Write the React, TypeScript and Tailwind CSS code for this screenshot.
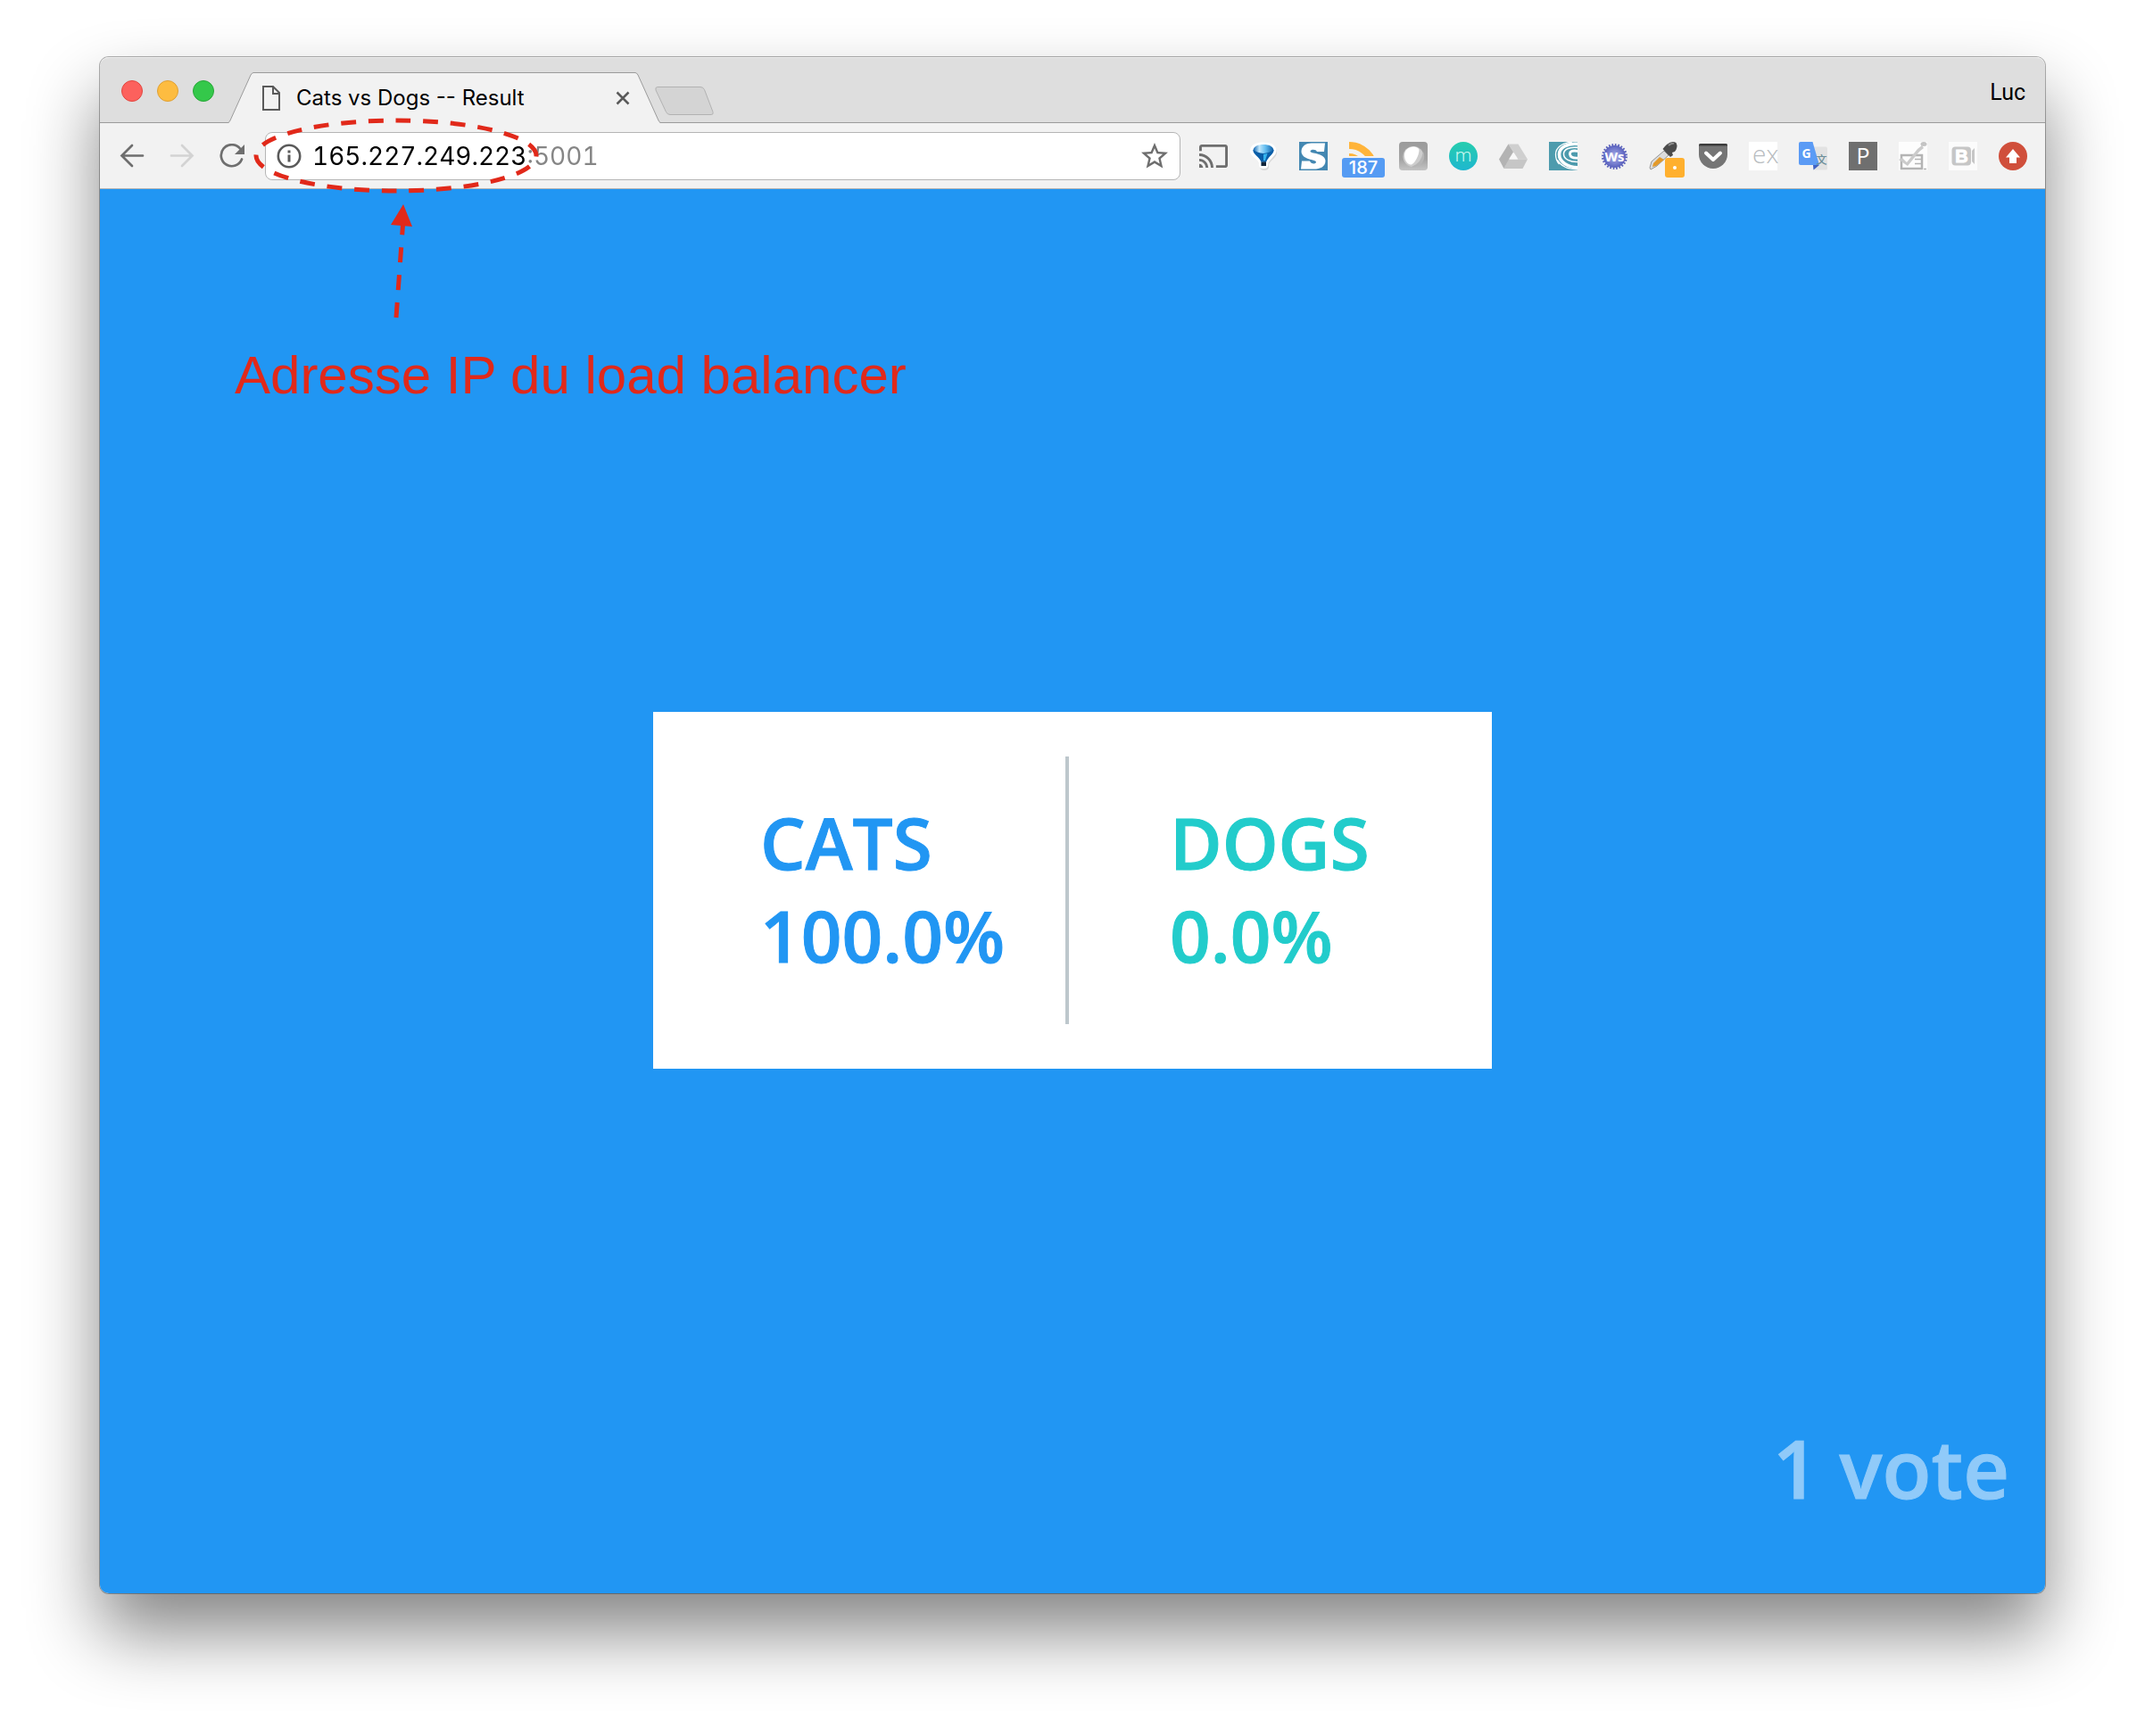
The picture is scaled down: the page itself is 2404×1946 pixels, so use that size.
import type { ReactNode } from "react";

function Svg({ children, label }: { children: ReactNode; label?: string }) {
  return (
    <svg viewBox="0 0 32 32" className="block size-8 overflow-visible" aria-label={label}>
      {children}
    </svg>
  );
}

const CastIcon = () => (
  <svg viewBox="1 1 22 22" className="block size-8" fill="#6e6e6e">
    <path d="M21 3H3c-1.1 0-2 .9-2 2v3h2V5h18v14h-7v2h7c1.1 0 2-.9 2-2V5c0-1.1-.9-2-2-2zM1 18v3h3c0-1.66-1.34-3-3-3zm0-4v2c2.76 0 5 2.24 5 5h2c0-3.87-3.13-7-7-7zm0-4v2c4.97 0 9 4.03 9 9h2c0-6.08-4.93-11-11-11z" />
  </svg>
);

const BalloonIcon = () => (
  <Svg>
    <defs>
      <linearGradient id="balloon" x2="1" y2="0">
        <stop offset="0" stopColor="#0c62b0" />
        <stop offset="0.300" stopColor="#bfe6fb" />
        <stop offset="0.600" stopColor="#63bdf0" />
        <stop offset="1" stopColor="#0a5aa3" />
      </linearGradient>
    </defs>
    <path d="M3 11C3 4 9 2 17 2s14 4 14 10c0 5-6 8-9 13v4q-1 3-5 3t-5-3l-1-4C9 18 3 16 3 11z" fill="#cfcfcf" opacity=".7" />
    <path d="M1 10.500C1 3 8 .5 16 .5s14.500 3 14.500 9.500c0 5-6 8-9 13.500l-.5 4q-1 2.500-5 2.500t-5-2.500l-.5-4C8.500 18 1 16 1 10.500z" fill="#fff" />
    <path d="M4.500 9.500C5 5 10 3 16 3s11 2 11.500 6.500c0 4-6.500 7.500-8.500 13V27h-5.500v-4.500C11.500 17 4.500 14 4.500 9.500z" fill="url(#balloon)" />
    <path d="M4.500 9q5 3.500 11.500 4 6.500-.5 11.500-4c0 4-6.500 8-8.500 13.500h-5.500C11.500 17 4.500 13.500 4.500 9z" fill="#0b5ea8" />
    <path d="M16 14l4.500-1-2.500 8h-2z" fill="#35b4ee" />
    <path d="M13.500 22.500H19V27h-5.500z" fill="#12253a" />
  </Svg>
);

const SIcon = () => (
  <Svg>
    <path d="M0 0h32v32H0z" fill="#4488b2" />
    <path d="M29 1.500l-1 9.500h-8c-1-3-7-3-7.500-.5-.5 3 16 1.500 17 10.500 0 7-6 9.500-13 9.500H2l1-9h9c1 3.500 7 4 7 1 0-3-16-2-16.500-11.500C2.500 4 9 1 15 1.500z" fill="#fff" />
  </Svg>
);

const FeedIcon = () => (
  <div className="relative">
    <Svg>
      <path d="M0 4a28 28 0 0 1 28 28" fill="none" stroke="#ffb43a" strokeWidth="8" />
      <path d="M0 16a16 16 0 0 1 16 16" fill="none" stroke="#ffb43a" strokeWidth="6" />
    </Svg>
    <span className="absolute -left-2 top-4 flex h-6 w-12 items-center justify-center border-t-2 border-[#f2f2f2] bg-[#f2f2f2]">
      <span className="flex h-[22px] w-12 items-center justify-center rounded-[3px] bg-[#559bf3] text-[20px] leading-none font-medium text-white">187</span>
    </span>
  </div>
);

const ShieldIcon = () => (
  <Svg>
    <defs>
      <linearGradient id="shield" x2="0" y2="1">
        <stop offset="0" stopColor="#9b9b9b" />
        <stop offset=".6" stopColor="#a3a3a3" />
        <stop offset="1" stopColor="#c4c4c4" />
      </linearGradient>
    </defs>
    <rect width="32" height="32" rx="4" fill="url(#shield)" />
    <circle cx="16" cy="16.500" r="11.500" fill="#cdcdcd" />
    <path d="M27 11a12 12 0 0 1-13 17q11-4 13-17z" fill="#b5b5b5" />
    <path d="M6 15C6 9 11 5.500 16 5.500c3 0 6 1.500 6.500 3.500 0 6-5 15-8.500 16.500C9 26 6 20 6 15z" fill="#fff" />
  </Svg>
);

const MIcon = () => (
  <Svg>
    <defs>
      <linearGradient id="m" x2="0" y2="1">
        <stop offset="0" stopColor="#26cdae" />
        <stop offset="1" stopColor="#1eb7cf" />
      </linearGradient>
    </defs>
    <circle cx="16" cy="16" r="16" fill="url(#m)" />
    <text x="16" y="22" textAnchor="middle" fill="#c9f6ef" fontSize="21" fontWeight="300" fontFamily="Roboto, sans-serif">m</text>
  </Svg>
);

const DriveIcon = () => (
  <Svg>
    <path d="M10.500 2.500h11L32 19.500H21.500z" fill="#cfcfcf" />
    <path d="M10.500 2.500L0 19.500 5.500 30l11-18z" fill="#b3b3b3" />
    <path d="M11 19.500h21L26.500 30h-21z" fill="#c6c6c6" />
    <path d="M16 11.500l5 8H11z" fill="#f8f8f8" />
  </Svg>
);

const SwirlIcon = () => (
  <Svg>
    <defs>
      <clipPath id="sq"><path d="M0 0h32v32H0z" /></clipPath>
    </defs>
    <path d="M0 0h32v32H0z" fill="#4d9bad" />
    <g fill="none" stroke="#fff" clipPath="url(#sq)">
      <path d="M26 0C14 1 7.500 7 7.500 14c0 4 1 8 4 11" strokeWidth="1.300" />
      <path d="M33 2.500C20 1 11.500 7 11.500 14c0 9 10 14.500 22 15" strokeWidth="3.600" />
      <path d="M33 6.500C22 5 16.500 9 16.500 13.500c0 6 7 9.500 17 9" strokeWidth="1.500" />
      <path d="M33 10.500c-7-1.500-10 .5-9.500 3.500.5 3.500 5 4.500 10 4" strokeWidth="2.800" />
      <path d="M9 20c4 7 13 11 24 11" strokeWidth="1.500" />
    </g>
  </Svg>
);

const WsIcon = () => (
  <Svg>
    <defs>
      <radialGradient id="ws">
        <stop offset="0" stopColor="#aeb3ea" />
        <stop offset="1" stopColor="#5a62c0" />
      </radialGradient>
    </defs>
    <circle cx="17.500" cy="16.500" r="12.500" fill="url(#ws)" />
    <circle cx="17.500" cy="16.500" r="13" fill="none" stroke="#5c63bb" strokeWidth="3" strokeDasharray="1.700 1.700" />
    <text x="17.500" y="22" textAnchor="middle" fill="#fff" fontSize="15" fontWeight="700" fontFamily="Open Sans, sans-serif">Ws</text>
  </Svg>
);

const DropperIcon = () => (
  <div className="relative">
    <Svg>
      <path d="M17 10l5 5L9 27l-7 4-1-2 2-7z" fill="#dcdcdc" stroke="#969696" />
      <path d="M12 17l5 3-9 7-4 1 1-4z" fill="#e39a2a" />
      <path d="M20 3q6-5 10.500-2Q33 6 29 11l-3 1 1 3-3 2-8.500-9L18 5z" fill="#4c4c4c" />
      <path d="M22 4q4-3 6-2" stroke="#8d8d8d" strokeWidth="2" fill="none" />
    </Svg>
    <span className="absolute left-[18px] top-[18px] flex size-[22px] items-center justify-center rounded-[3px] bg-[#ffb02e]">
      <span className="size-1 rounded-full bg-white" />
    </span>
  </div>
);

const PocketIcon = () => (
  <Svg>
    <path d="M0 4q0-2 2-2h28q2 0 2 2v10a16 16 0 0 1-32 0z" fill="#757575" />
    <path d="M0 4.500V4q0-2 2-2h28q2 0 2 2v.5z" fill="#3d3d3d" />
    <path d="M8 12.500l8 7.500 8-7.500" fill="none" stroke="#fff" strokeWidth="4" strokeLinecap="round" strokeLinejoin="round" />
  </Svg>
);

const ExIcon = () => (
  <Svg>
    <path d="M0 0h32v32H0z" fill="#fff" />
    <text x="4" y="24" fill="#b8bcc0" fontSize="28" fontWeight="300" fontFamily="Open Sans, sans-serif">ex</text>
  </Svg>
);

const TranslateIcon = () => (
  <Svg>
    <path d="M14 5.500h16q2 0 2 2V30q0 1.500-2 1.500H17z" fill="#e2e2e2" />
    <path d="M16 26h7l-6.500 5.500z" fill="#3f62c4" />
    <path d="M2 0h13.500L23 26H2q-2 0-2-2V2q0-2 2-2z" fill="#5b9bf5" />
    <text x="19.500" y="25" fill="#6d8e99" fontSize="12" fontWeight="500" fontFamily="Noto Sans CJK SC, sans-serif">文</text>
    <text x="3.500" y="18" fill="#fff" fontSize="14" fontWeight="700" fontFamily="Open Sans, sans-serif">G</text>
  </Svg>
);

const PIcon = () => (
  <Svg>
    <path d="M0 0h32v32H0z" fill="#6f6f6f" />
    <text x="8.500" y="25" fill="#fff" fontSize="25" fontFamily="Open Sans, sans-serif">P</text>
  </Svg>
);

const ChecklistIcon = () => (
  <Svg>
    <path d="M0 0h32v32H0z" fill="#fdfdfd" />
    <path d="M3 15h23v15H3z" fill="none" stroke="#b4b4b4" strokeWidth="2.500" />
    <path d="M18 19.500h7M18 24.500h7M28 30.500h3" stroke="#b4b4b4" strokeWidth="1.500" />
    <path d="M0 20l4-2 5 5L21 8l5-4 2 3-5 4L10 27z" fill="#cbcbcb" />
    <ellipse cx="28" cy="2.500" rx="3.500" ry="2.500" fill="#c4c4c4" />
  </Svg>
);

const BIcon = () => (
  <Svg>
    <path d="M0 0h32v32H0z" fill="#fbfbfb" />
    <rect x="3.500" y="5.500" width="21.500" height="21" rx="4" fill="#c6c6c6" />
    <path d="M29 7v18l-3-3V10z" fill="#c6c6c6" />
    <text x="14.500" y="23" textAnchor="middle" fill="#fff" stroke="#fff" fontSize="20" fontWeight="700" fontFamily="Liberation Sans, sans-serif">B</text>
  </Svg>
);

const UpIcon = () => (
  <Svg>
    <circle cx="16" cy="16" r="16" fill="#d04f3b" />
    <path d="M16 8l8 9.500h-4V24h-8v-6.500H8z" fill="#fff" />
  </Svg>
);

const extensions: [string, () => ReactNode][] = [
  ["Cast", CastIcon],
  ["Balloon", BalloonIcon],
  ["S", SIcon],
  ["Feeds", FeedIcon],
  ["Shield", ShieldIcon],
  ["Momentum", MIcon],
  ["Drive", DriveIcon],
  ["Swirl", SwirlIcon],
  ["WebSocket", WsIcon],
  ["Color picker", DropperIcon],
  ["Pocket", PocketIcon],
  ["ex", ExIcon],
  ["Translate", TranslateIcon],
  ["P", PIcon],
  ["Checklist", ChecklistIcon],
  ["B", BIcon],
  ["Update", UpIcon],
];

function TitleBar() {
  return (
    <header className="flex h-[74px] items-end rounded-t-[10px] bg-[#dedede] shadow-[inset_0_-1px_0_#9b9b9b,inset_0_1px_0_#ececec]">
      <div className="flex gap-4 self-center pt-0.5 pl-6">
        <button aria-label="Close window" className="size-6 rounded-full border border-[#e2463f] bg-[#fc615d]" />
        <button aria-label="Minimize window" className="size-6 rounded-full border border-[#dfa035] bg-[#fdbc40]" />
        <button aria-label="Zoom window" className="size-6 rounded-full border border-[#28a738] bg-[#34c84a]" />
      </div>
      <div className="ml-4 flex h-[57px] w-[484px]">
        <svg viewBox="0 0 28 57" className="h-[57px] w-7 shrink-0">
          <path d="M0 56.500Q1 56 2 54L25 3Q26.500.5 28 .5V57H0z" fill="#f2f2f2" />
          <path d="M0 56.500Q1 56 2 54L25 3Q26.500.5 28 .5" fill="none" stroke="#9b9b9b" />
        </svg>
        <div className="flex flex-1 items-center border-t border-[#9b9b9b] bg-[#f2f2f2] pr-1.5 pl-2.5">
          <svg viewBox="0 0 20 28" className="h-7 w-5" fill="none" stroke="#5a5a5a" strokeWidth="2">
            <path d="M1 1h11l7 7v19H1z" />
            <path d="M12 1v8h7" />
          </svg>
          <span className="ml-[18px] flex-1 text-[24px] whitespace-nowrap text-black">Cats vs Dogs -- Result</span>
          <button aria-label="Close tab">
            <svg viewBox="0 0 16 16" className="size-4" stroke="#5a5a5a" strokeWidth="2.500">
              <path d="M1.500 1.500l13 13M14.500 1.500l-13 13" />
            </svg>
          </button>
        </div>
        <svg viewBox="0 0 28 57" className="h-[57px] w-7 shrink-0">
          <path d="M28 56.500Q27 56 26 54L3 3Q1.500.5 0 .5V57H28z" fill="#f2f2f2" />
          <path d="M28 56.500Q27 56 26 54L3 3Q1.500.5 0 .5" fill="none" stroke="#9b9b9b" />
        </svg>
      </div>
      <button aria-label="New tab" className="-ml-1.5 pb-[9px]">
        <svg viewBox="0 0 66 32" className="h-8 w-[66px]">
          <path d="M3 .5h48q3 0 4.500 3l9.500 25q1 3-2 3H17q-3 0-4.500-3L1 4Q0 .5 3 .5z" fill="#d4d4d4" stroke="#b2b2b2" />
        </svg>
      </button>
      <button className="mr-[22px] ml-auto self-center pt-1.5 font-[Roboto,sans-serif] text-[25px] leading-8 text-black">Luc</button>
    </header>
  );
}

function Toolbar() {
  return (
    <nav className="flex h-[74px] items-center border-b border-[#b4b4b4] bg-[#f2f2f2] pl-[22px] pr-5">
      <button aria-label="Back">
        <svg viewBox="0 0 28 28" className="size-7" fill="none" stroke="#6e6e6e" strokeWidth="2.700" strokeLinecap="round">
          <path d="M26 13.500H3M14 2L2.500 13.500 14 25" />
        </svg>
      </button>
      <button aria-label="Forward" className="ml-7" disabled>
        <svg viewBox="0 0 28 28" className="size-7" fill="none" stroke="#d3d3d3" strokeWidth="2.700" strokeLinecap="round">
          <path d="M2 13.500h23M14 2l11.500 11.500L14 25" />
        </svg>
      </button>
      <button aria-label="Reload" className="ml-7">
        <svg viewBox="0 0 28 28" className="size-7" fill="none">
          <path d="M25 17.500A12 12 0 1 1 23 5.500" stroke="#6e6e6e" strokeWidth="2.700" strokeLinecap="round" />
          <path d="M28 1v11H17z" fill="#6e6e6e" />
        </svg>
      </button>
      <div className="ml-[23px] flex h-[54px] flex-1 items-center rounded-lg border border-[#b5b5b5] bg-white pr-2.5 pl-3">
        <svg viewBox="0 0 28 28" className="size-7 shrink-0" aria-hidden="true">
          <circle cx="14" cy="14" r="12.200" fill="none" stroke="#5a5a5a" strokeWidth="2.600" />
          <path d="M12.500 7.500h3v3h-3zM12.500 12.500h3v8h-3z" fill="#5a5a5a" />
        </svg>
        <input
          aria-label="Address"
          defaultValue="165.227.249.223:5001"
          className="ml-3 min-w-0 flex-1 bg-[linear-gradient(90deg,#000_238px,#858585_238px)] bg-clip-text text-[28px] leading-9 text-transparent tabular-nums outline-none"
        />
        <button aria-label="Bookmark this page">
          <svg viewBox="0 0 24 24" className="size-9" fill="#6e6e6e">
            <path d="M22 9.240l-7.190-.620L12 2 9.190 8.630 2 9.240l5.460 4.730L5.820 21 12 17.270 18.180 21l-1.630-7.030L22 9.240zM12 15.400l-3.760 2.270 1-4.280-3.320-2.880 4.380-.380L12 6.100l1.710 4.040 4.380.380-3.320 2.880 1 4.280L12 15.400z" />
          </svg>
        </button>
      </div>
      <div className="ml-[21px] flex gap-6">
        {extensions.map(([name, Icon]) => (
          <button key={name} aria-label={name} className="size-8">
            <Icon />
          </button>
        ))}
      </div>
    </nav>
  );
}

function Annotation() {
  return (
    <div className="pointer-events-none absolute top-[68px] left-[151px] flex flex-col gap-6 text-[#e1291a]">
      <svg viewBox="0 0 360 229" className="h-[229px] w-[360px]" fill="none" stroke="currentColor" strokeWidth="5">
        <ellipse cx="181" cy="42.500" rx="157" ry="39.500" pathLength="682" strokeDasharray="17 14" strokeDashoffset="16" />
        <path d="M181 224L188.500 120" strokeDasharray="17 14" />
        <path d="M189 97l10 25-24-2z" fill="currentColor" stroke="none" />
      </svg>
      <p className="font-['Liberation_Sans',Arial,sans-serif] text-[60px] leading-[72px] whitespace-nowrap">Adresse IP du load balancer</p>
    </div>
  );
}

export default function App() {
  return (
    <div className="flex min-h-screen bg-white px-28 pt-16 pb-40 font-[Inter,sans-serif]">
      <div className="relative flex flex-1 flex-col rounded-[10px] shadow-[0_0_0_1px_rgba(0,0,0,0.3),0_44px_80px_rgba(0,0,0,0.48)]">
        <TitleBar />
        <Toolbar />
        <main className="grid flex-1 grid-rows-[1fr_auto_1fr] rounded-b-[10px] bg-[#2196f3] pb-0.5 font-['Open_Sans',sans-serif] font-semibold [-webkit-text-stroke:1px]">
          <section className="row-start-2 flex h-[400px] w-[940px] items-center justify-self-center bg-white py-[50px] text-[80px] leading-[104px]">
            <div className="w-[462px] pb-1 pl-[120px] text-[#2196f3]">
              <div>CATS</div>
              <div>100.0%</div>
            </div>
            <div className="w-1 self-stretch bg-[#bdc7cc]" />
            <div className="pb-1 pl-[113px] text-[#22cccb]">
              <div>DOGS</div>
              <div>0.0%</div>
            </div>
          </section>
          <p className="row-start-3 self-end justify-self-end pr-10 pb-20 text-[90px] leading-[118px] text-[#90caf9]">1 vote</p>
        </main>
        <Annotation />
      </div>
    </div>
  );
}
